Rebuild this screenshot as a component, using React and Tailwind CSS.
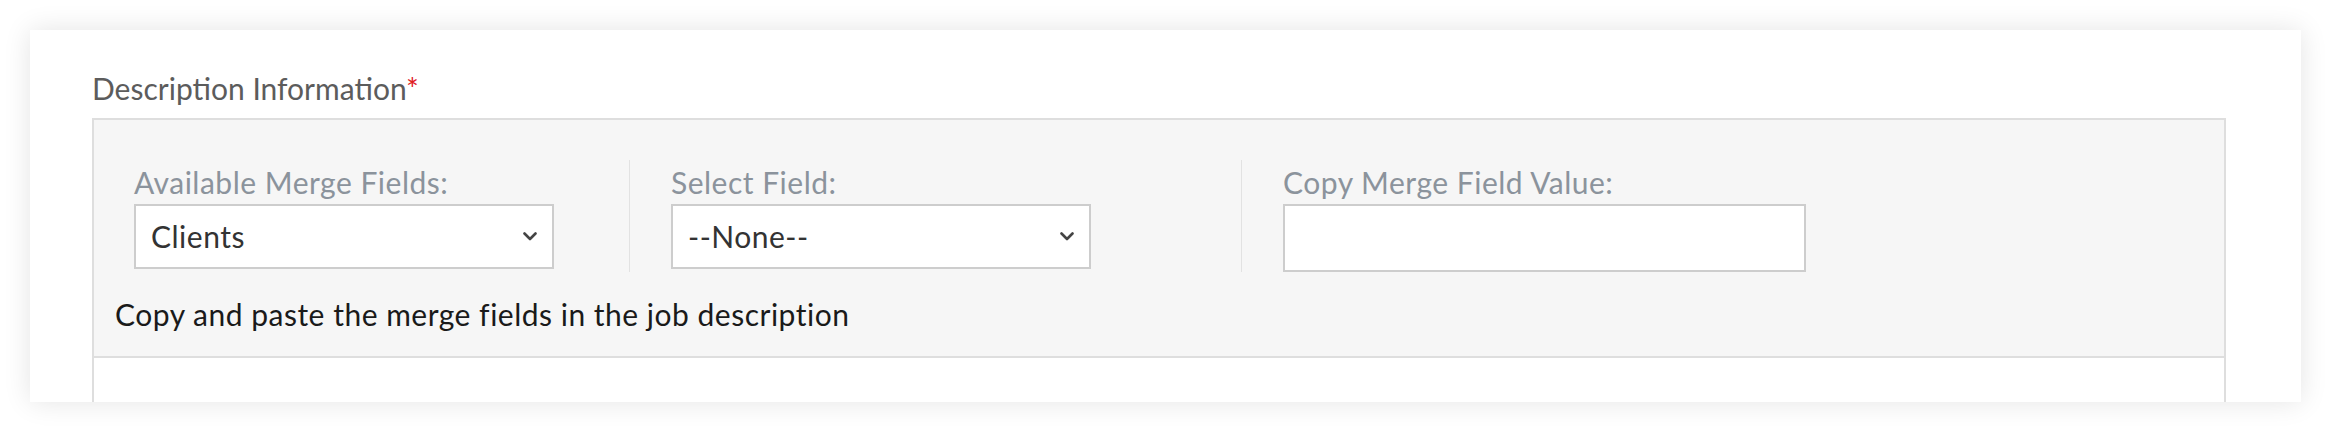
import React from "react";

function Chevron() {
  return (
    <svg width="14" height="9" viewBox="0 0 14 9" className="shrink-0">
      <polyline points="1.5,1.5 7,7 12.5,1.5" fill="none" stroke="#444" strokeWidth="2.6" strokeLinecap="round" strokeLinejoin="round" />
    </svg>
  );
}

function SelectBox({ value }) {
  return (
    <div className="flex h-[65px] w-[420px] items-center justify-between border-2 border-[#cdcdcd] bg-white pl-[15px] pr-[15px] text-[30px] tracking-[0.5px] text-[#333333]">
      <span>{value}</span>
      <Chevron />
    </div>
  );
}

export default function App() {
  return (
    <div className="bg-white p-[30px] font-['Lato',sans-serif]">
      <div className="h-[372px] overflow-hidden bg-white pl-[62px] pr-[75px] pt-[40px] shadow-[0_0_26px_rgba(0,0,0,0.11)]">
        <div className="mb-[12px] text-[30px] leading-[36px] text-[#5c5c5c]">
          Description Information<span className="text-[#e0201f]">*</span>
        </div>
        <div className="border-2 border-[#dedede]">
          <div className="border-b-2 border-[#dedede] bg-[#f6f6f6] px-[21px] pb-[22px] pt-[40px]">
            <div className="ml-[19px] flex">
              <div className="w-[495px]">
                <div className="h-[44px] text-[30px] leading-[44px] tracking-[0.5px] text-[#8b939c]">Available Merge Fields:</div>
                <SelectBox value="Clients" />
              </div>
              <div className="w-[612px] border-l border-[#e2e2e2] pl-[41px]">
                <div className="h-[44px] text-[30px] leading-[44px] tracking-[0.5px] text-[#8b939c]">Select Field:</div>
                <SelectBox value="--None--" />
              </div>
              <div className="border-l border-[#e2e2e2] pl-[41px]">
                <div className="h-[44px] text-[30px] leading-[44px] tracking-[0.5px] text-[#8b939c]">Copy Merge Field Value:</div>
                <div className="h-[68px] w-[523px] border-2 border-[#cdcdcd] bg-white" />
              </div>
            </div>
            <div className="mt-[22px] text-[30px] leading-[40px] tracking-[0.5px] text-[#1a1a1a]">
              Copy and paste the merge fields in the job description
            </div>
          </div>
          <div className="h-[200px] bg-white" />
        </div>
      </div>
    </div>
  );
}
